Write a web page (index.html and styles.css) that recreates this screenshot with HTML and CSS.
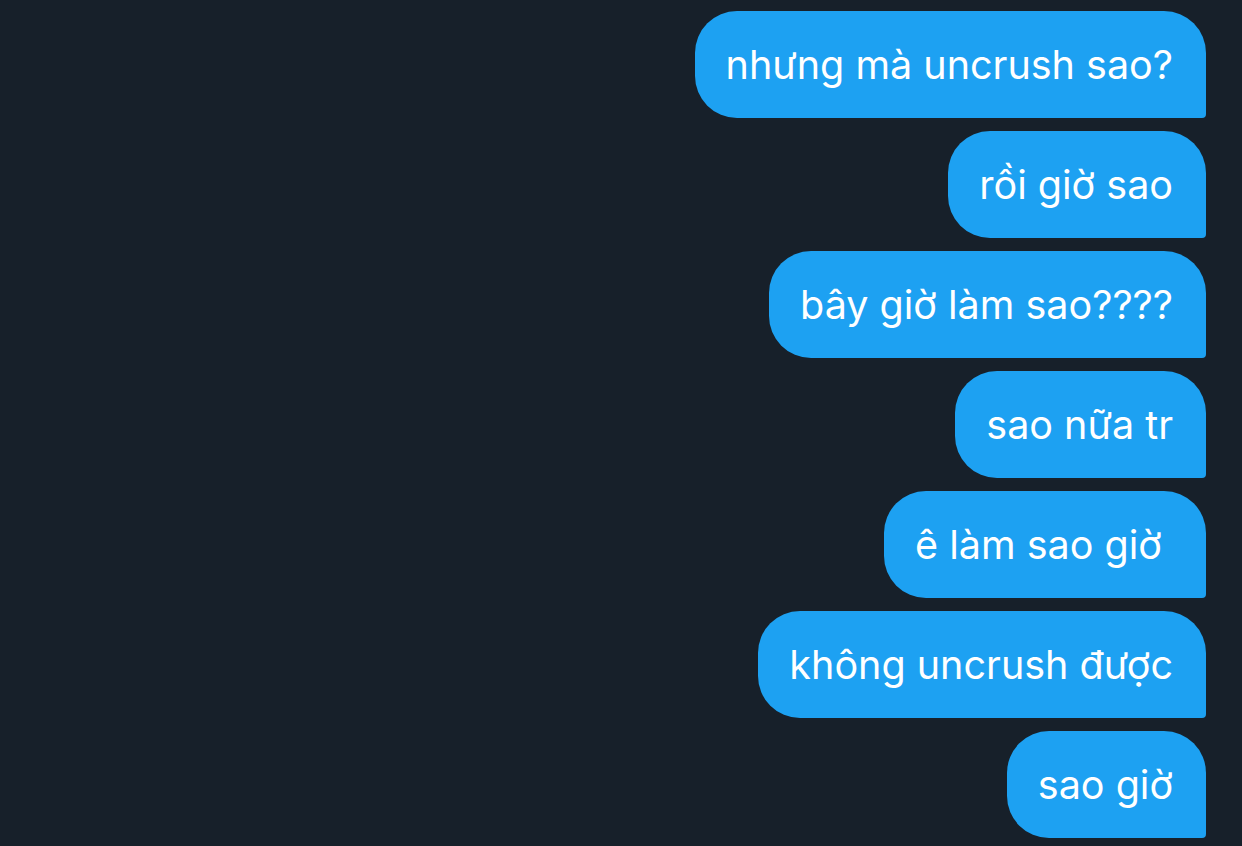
FILE: index.html
```html
<!DOCTYPE html>
<html lang="vi">
<head>
<meta charset="utf-8">
<link rel="stylesheet" href="styles.css">
</head>
<body>
<div class="thread">
  <div class="bubble">nhưng mà uncrush sao?</div>
  <div class="bubble">rồi giờ sao</div>
  <div class="bubble">bây giờ làm sao????</div>
  <div class="bubble">sao nữa tr</div>
  <div class="bubble">ê làm sao giờ&nbsp;</div>
  <div class="bubble">không uncrush được</div>
  <div class="bubble">sao giờ</div>
</div>
</body>
</html>
```
FILE: styles.css
```css
html, body {
  margin: 0;
  padding: 0;
  background: #17202a;
  height: 100%;
}
.thread {
  display: flex;
  flex-direction: column;
  align-items: flex-end;
  gap: 13px;
  padding: 11px 36px 0 0;
}
.bubble {
  box-sizing: border-box;
  height: 107px;
  display: flex;
  align-items: center;
  padding: 0 33px 0 31px;
  background: #1da1f2;
  color: #ffffff;
  font-family: Inter, "Noto Sans", sans-serif;
  font-size: 39.5px;
  white-space: pre;
  border-radius: 42px 42px 4px 42px;
}
```
